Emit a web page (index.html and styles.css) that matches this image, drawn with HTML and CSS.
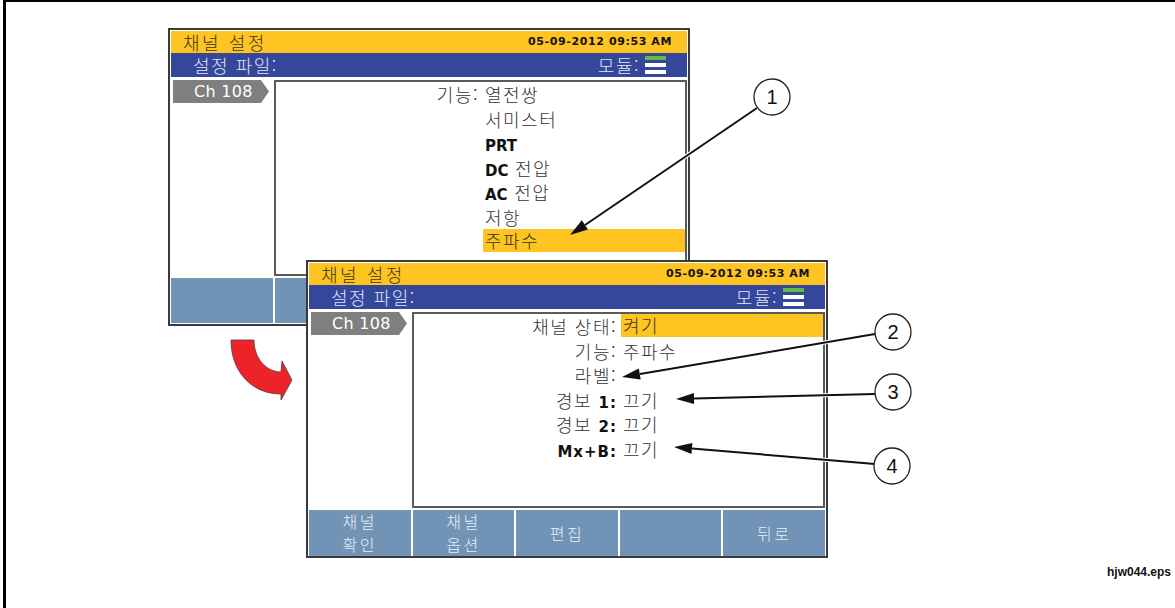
FILE: index.html
```html
<!DOCTYPE html>
<html lang="ko">
<head>
    <meta charset="utf-8">
    <title>채널 설정</title>
    <link rel="stylesheet" href="styles.css">
</head>
<body>
<div class="figure">

    <!-- Screen 1: function list -->
    <div class="screen screen-one">
        <div class="title-bar"><span class="title">채널 설정</span><span class="clock">05-09-2012 09:53 AM</span></div>
        <div class="file-bar">
            <span>설정 파일:</span>
            <span class="module">모듈: <span class="module-icon"><span></span><span></span><span></span></span></span>
        </div>
        <div class="screen-body">
            <div class="side"><div class="ch-tab">Ch 108</div></div>
            <div class="panel">
                <div class="label">기능:</div><div class="value">열전쌍</div>
                <div class="value alone">서미스터</div>
                <div class="value alone"><b class="latin">PRT</b></div>
                <div class="value alone"><b class="latin">DC</b> 전압</div>
                <div class="value alone"><b class="latin">AC</b> 전압</div>
                <div class="value alone">저항</div>
                <div class="value alone sel">주파수</div>
            </div>
        </div>
        <div class="softkeys">
            <div></div><div></div><div></div><div></div><div></div>
        </div>
    </div>

    <!-- Screen 2: channel settings -->
    <div class="screen screen-two">
        <div class="title-bar"><span class="title">채널 설정</span><span class="clock">05-09-2012 09:53 AM</span></div>
        <div class="file-bar">
            <span>설정 파일:</span>
            <span class="module">모듈: <span class="module-icon"><span></span><span></span><span></span></span></span>
        </div>
        <div class="screen-body">
            <div class="side"><div class="ch-tab">Ch 108</div></div>
            <div class="panel">
                <div class="label">채널 상태:</div><div class="value sel">켜기</div>
                <div class="label">기능:</div><div class="value">주파수</div>
                <div class="label">라벨:</div><div class="value"></div>
                <div class="label">경보 <b class="latin wide">1:</b></div><div class="value">끄기</div>
                <div class="label">경보 <b class="latin wide">2:</b></div><div class="value">끄기</div>
                <div class="label"><b class="latin wide">Mx+B:</b></div><div class="value">끄기</div>
            </div>
        </div>
        <div class="softkeys">
            <div>채널<br>확인</div>
            <div>채널<br>옵션</div>
            <div>편집</div>
            <div></div>
            <div>뒤로</div>
        </div>
    </div>

    <!-- callouts and the red turn arrow -->
    <svg class="marks" viewBox="6 2 1169 606" width="1169" height="606">
        <path d="M231,340 L254,340 C254,358 266,372 281,372 L282,361 L292,380 L281,400 L281,394 C252,394 231,372 231,340 Z"
              fill="#ee2229" stroke="#444" stroke-width="0.8"/>

        <g stroke="#fff" stroke-width="4" fill="none">
            <line x1="757" y1="108" x2="585" y2="225"/>
            <line x1="875" y1="334" x2="640" y2="374"/>
            <line x1="875" y1="394" x2="694" y2="398.5"/>
            <line x1="875" y1="464" x2="692" y2="448.5"/>
        </g>
        <g stroke="#111" stroke-width="2" fill="none">
            <line x1="757" y1="108" x2="585" y2="225"/>
            <line x1="875" y1="334" x2="640" y2="374"/>
            <line x1="875" y1="394" x2="694" y2="398.5"/>
            <line x1="875" y1="464" x2="692" y2="448.5"/>
        </g>
        <g fill="#111">
            <polygon points="570,235 588,229.4 581.8,220.3"/>
            <polygon points="622,377 640.7,379.4 638.8,368.6"/>
            <polygon points="676,399 694.1,404 693.9,393"/>
            <polygon points="674,447 692.4,443 691.5,454"/>
        </g>

        <g fill="#fff" stroke="#222" stroke-width="1.3">
            <circle cx="772" cy="97" r="18"/>
            <circle cx="893" cy="332" r="18"/>
            <circle cx="893" cy="392" r="18"/>
            <circle cx="892" cy="466" r="18"/>
        </g>
        <g class="num" text-anchor="middle">
            <text x="772" y="104">1</text>
            <text x="893" y="339">2</text>
            <text x="893" y="399">3</text>
            <text x="892" y="473">4</text>
        </g>
    </svg>

    <div class="file-name">hjw044.eps</div>
</div>
</body>
</html>
```

FILE: styles.css
```css
body {
    margin: 0;
    overflow: hidden;
    background: #fff;
    font-family: "Noto Sans CJK KR", "Noto Sans", sans-serif;
}

.figure {
    position: relative;
    width: 1169px;
    height: 606px;
    margin-left: 3px;
    border-left: 3px solid #000;
    border-top: 2px solid #000;
}

/* instrument screens */
.screen {
    position: absolute;
    width: 522px;
    height: 298px;
    box-sizing: border-box;
    border: 2px solid #3a3a3a;
    padding: 1px;
    background: #fff;
    display: flex;
    flex-direction: column;
    font-size: 18px;
    font-weight: 300;
    letter-spacing: 1.5px;
    color: #333;
}
.screen-one { left: 162px; top: 26px; }
.screen-two { left: 300px; top: 258px; }

.title-bar {
    flex: none;
    height: 22px;
    line-height: 22px;
    background: #fec421;
    color: #3d3612;
    display: flex;
    align-items: center;
    justify-content: space-between;
    padding: 0 15px 0 12px;
}
.title { letter-spacing: 2.5px; }
.clock {
    font-family: "DejaVu Sans", sans-serif;
    font-weight: bold;
    font-size: 11px;
    letter-spacing: 0.6px;
    color: #111;
}

.file-bar {
    flex: none;
    height: 24px;
    background: #35479b;
    color: #dfe5f5;
    display: flex;
    align-items: center;
    justify-content: space-between;
    padding: 0 21px 0 22px;
}
.module {
    display: flex;
    align-items: center;
    gap: 5px;
}
.module-icon {
    display: flex;
    flex-direction: column;
    gap: 3px;
    width: 21px;
}
.module-icon span {
    height: 4px;
    background: #fff;
}
.module-icon span:first-child { background: #63b946; }

.screen-body {
    flex: 1;
    min-height: 0;
    display: flex;
    padding-top: 3px;
}
.side {
    flex: none;
    width: 103px;
}
.ch-tab {
    width: 96px;
    height: 23px;
    margin-left: 2px;
    box-sizing: border-box;
    padding-left: 21px;
    background: #7f7f7f;
    clip-path: polygon(0 0, 88px 0, 96px 50%, 88px 100%, 0 100%);
    color: #fff;
    font-family: "DejaVu Sans", sans-serif;
    font-size: 16px;
    font-weight: normal;
    letter-spacing: 0.3px;
    line-height: 23px;
}

.panel {
    flex: 1;
    border: 2px solid #5a5a5a;
    display: grid;
    grid-template-columns: 207px 1fr;
    grid-auto-rows: 24.5px;
    align-content: start;
    line-height: 24px;
}
.label {
    text-align: right;
    padding-right: 4px;
    white-space: nowrap;
}
.value {
    padding-left: 2px;
    white-space: nowrap;
}
.alone { grid-column: 2; }
.sel {
    background: #fec421;
    height: 23px;
    line-height: 23px;
    color: #3d3612;
}
b.latin {
    font-family: "DejaVu Sans", sans-serif;
    font-weight: bold;
    font-size: 15px;
    letter-spacing: 0;
    color: #111;
}
b.wide { letter-spacing: 1px; }

.softkeys {
    flex: none;
    height: 45px;
    margin-top: 2px;
    display: grid;
    grid-template-columns: repeat(5, 1fr);
    gap: 2px;
}
.softkeys div {
    background: #7093b6;
    color: #e9eef6;
    display: flex;
    align-items: center;
    justify-content: center;
    text-align: center;
    font-size: 16px;
    line-height: 23px;
    letter-spacing: 2.5px;
}

/* callouts */
.marks {
    position: absolute;
    left: 0;
    top: 0;
    pointer-events: none;
}
.num text {
    font-family: "Liberation Sans", Arial, sans-serif;
    font-size: 20px;
    fill: #111;
}

.file-name {
    position: absolute;
    left: 1101px;
    top: 563px;
    font-family: "Liberation Sans", Arial, sans-serif;
    font-weight: bold;
    font-size: 12px;
    color: #111;
}
```
